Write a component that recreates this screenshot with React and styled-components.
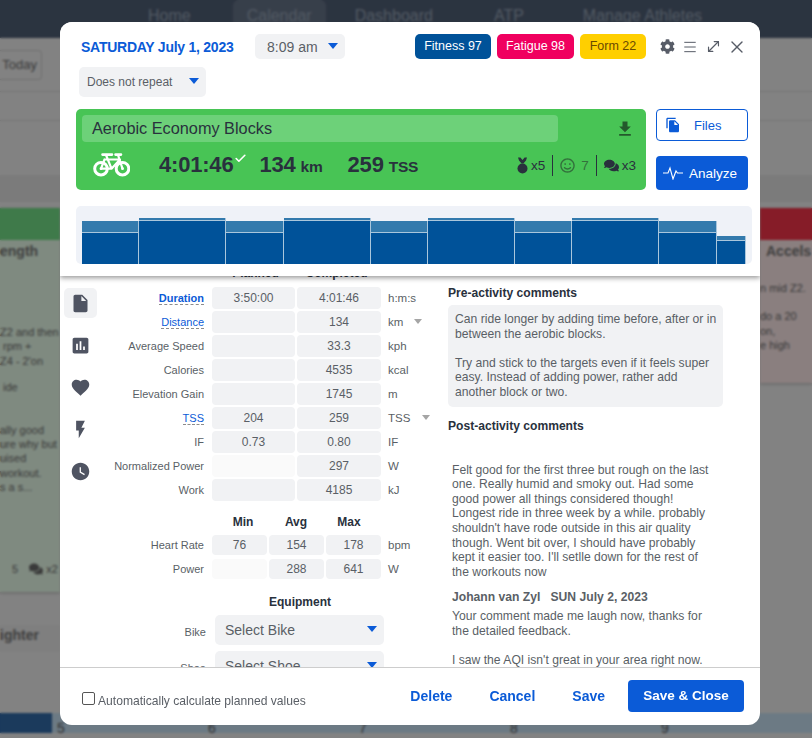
import React from 'react';
import styled, { createGlobalStyle } from 'styled-components';
import { Check, Menu, MoveDiagonal, X } from 'lucide-react';
import { FaCog, FaComments, FaRegSmile } from 'react-icons/fa';
import {
  MdAssessment,
  MdFavorite,
  MdFileCopy,
  MdFlashOn,
  MdGetApp,
  MdInsertDriveFile,
  MdWatchLater
} from 'react-icons/md';

const BLUE = '#0b5bd7';
const FIELD = '#f1f2f4';
const INK = '#5a5f66';
const DARK = '#29313d';

const GlobalStyle = createGlobalStyle`
  html, body { margin: 0; padding: 0; }
  body { font-family: "Liberation Sans", Arial, sans-serif; background: #f1f1f1; overflow: hidden; }
  * { box-sizing: border-box; }
`;

// ---- calendar behind the dialog ---------------------------------------------
const Page = styled.div`
  height: 738px;
  display: flex;
  flex-direction: column;
  overflow: hidden;
  color: #6c6c6c;
`;

const Nav = styled.div`
  height: 38px;
  flex: none;
  display: flex;
  background: #516077;
  padding-left: 134px;
`;

const NavItem = styled.div`
  margin-left: ${props => props.$ml}px;
  padding: 7px 14px 0;
  font-size: 16px;
  color: #98a6b8;
  border-radius: 6px 6px 0 0;
  background: ${props => props.$active ? '#67758a' : 'transparent'};
`;

const Toolbar = styled.div`
  height: 54px;
  flex: none;
  padding-top: 12px;
  border-bottom: 1px solid #d6d6d6;
`;

const TodayButton = styled.div`
  width: 42px;
  height: 30px;
  border: 1px solid #cfcfcf;
  border-left: 0;
  border-radius: 0 4px 4px 0;
  font-size: 13px;
  line-height: 28px;
  text-align: right;
  padding-right: 4px;
`;

const SubRow = styled.div`
  height: ${props => props.$h}px;
  flex: none;
  background: ${props => props.$bg || 'transparent'};
  border-bottom: ${props => props.$line ? '1px solid #d6d6d6' : '0'};
  margin-bottom: ${props => props.$mb || 0}px;
`;

const Columns = styled.div`
  flex: 1;
  display: flex;
  justify-content: space-between;
  min-height: 0;
`;

const SideColumn = styled.div`
  width: ${props => props.$w}px;
`;

const DayCard = styled.div`
  height: ${props => props.$h}px;
  background: ${props => props.$bg};
  font-size: 11px;
  line-height: 14.4px;
  white-space: nowrap;
  overflow: hidden;
  box-shadow: 0 1px 3px rgba(0, 0, 0, 0.25);
`;

const DayStripe = styled.div`
  height: 32px;
  background: ${props => props.$bg};
`;

const DayTitle = styled.div`
  margin-top: 2px;
  height: 22px;
  padding-left: ${props => props.$pl || 0}px;
  font-size: 14px;
  font-weight: 700;
  line-height: 18px;
  color: #757575;
`;

const DayText = styled.div`
  padding-left: ${props => props.$pl || 0}px;
`;

const DayBlock = styled.div`
  margin-top: ${props => props.$mt}px;
`;

const DayFoot = styled.div`
  margin-top: 67px;
  display: flex;
  align-items: center;
  gap: 11px;
  padding-left: 12px;
  font-size: 11px;
  svg { font-size: 14px; vertical-align: -3px; }
`;

const NextCard = styled.div`
  margin-top: 33px;
  height: 27px;
  background: #ebebeb;
  font-size: 14px;
  font-weight: 700;
  color: #757575;
  line-height: 20px;
`;

const WeekBand = styled.div`
  height: 20px;
  flex: none;
  margin-bottom: 5px;
  display: flex;
  background: #c8e2f4;
`;

const WeekStart = styled.div`
  width: 73px;
  background: #326baa;
`;

const WeekDays = styled.div`
  display: flex;
  padding-left: 5px;
  font-size: 14px;
  line-height: 30px;
  color: #5a5a5a;
`;

const WeekDay = styled.div`
  width: 151px;
`;

// ---- dialog -----------------------------------------------------------------
const Overlay = styled.div`
  position: fixed;
  inset: 0;
  padding: 22px 52px 13px 60px;
  display: flex;
  background: rgba(0, 0, 0, 0.46);
  backdrop-filter: blur(1px);
`;

const Modal = styled.div`
  width: 700px;
  height: 703px;
  display: flex;
  flex-direction: column;
  overflow: hidden;
  background: #fff;
  border-radius: 12px;
`;

const Header = styled.div`
  position: relative;
  z-index: 1;
  flex: none;
  height: 254px;
  padding-top: 12px;
  background: #fff;
  box-shadow: 0 2px 5px rgba(0, 0, 0, 0.4);
`;

const TopRow = styled.div`
  display: flex;
  align-items: center;
  height: 25px;
  padding: 0 13px 0 21px;
`;

const DateLabel = styled.div`
  width: 174px;
  font-size: 14px;
  font-weight: 700;
  letter-spacing: -0.25px;
  color: ${BLUE};
`;

const Select = styled.div`
  display: flex;
  align-items: center;
  justify-content: space-between;
  flex: none;
  width: ${props => props.$w}px;
  height: ${props => props.$h}px;
  padding: 0 ${props => props.$pr || 7}px 0 ${props => props.$pl || 10}px;
  border-radius: 5px;
  background: ${FIELD};
  color: ${INK};
  font-size: ${props => props.$size || 12}px;
`;

const Caret = styled.span`
  flex: none;
  width: 0;
  height: 0;
  margin-top: ${props => props.$mt || -2}px;
  border-left: ${props => props.$s || 5}px solid transparent;
  border-right: ${props => props.$s || 5}px solid transparent;
  border-top: ${props => props.$s ? props.$s + 1 : 6}px solid ${props => props.$color || BLUE};
`;

const Badges = styled.div`
  margin-left: auto;
  display: flex;
  gap: 6px;
`;

const Badge = styled.div`
  height: 25px;
  width: ${props => props.$w}px;
  border-radius: 5px;
  background: ${props => props.$bg};
  color: ${props => props.$color || '#fff'};
  font-size: 12.5px;
  line-height: 25px;
  text-align: center;
`;

const Tools = styled.div`
  display: flex;
  align-items: center;
  gap: 7px;
  margin-left: 14px;
  color: #575c67;
  svg:last-child { margin-left: -2px; }
`;

const SecondRow = styled.div`
  margin: 8px 0 12px 19px;
`;

const PanelRow = styled.div`
  display: flex;
  gap: 10px;
  padding: 0 12px 0 16px;
`;

const Panel = styled.div`
  width: 570px;
  height: 81px;
  padding: 6px;
  background: #48c455;
  border-radius: 5px;
  color: ${DARK};
`;

const TitleRow = styled.div`
  display: flex;
  align-items: center;
  height: 27px;
`;

const TitleField = styled.div`
  width: 476px;
  height: 27px;
  padding-left: 10px;
  border-radius: 4px;
  background: #6dd179;
  font-size: 16.3px;
  line-height: 26px;
`;

const DownloadIcon = styled(MdGetApp)`
  margin-left: 57px;
  font-size: 20px;
  color: #24592c;
`;

const StatRow = styled.div`
  display: flex;
  align-items: center;
  height: 46px;
  padding-left: 11px;
`;

const BigStat = styled.div`
  margin-left: ${props => props.$ml}px;
  font-size: 22px;
  font-weight: 700;
  letter-spacing: -0.2px;
  white-space: nowrap;
`;

const StatUnit = styled.span`
  margin-left: 5px;
  font-size: 15.5px;
`;

const DoneCheck = styled(Check)`
  align-self: flex-start;
  margin: 10px 0 0 1px;
  color: #fff;
`;

const Social = styled.div`
  margin-left: auto;
  margin-right: -3px;
  display: flex;
  align-items: center;
  font-size: 13.5px;
`;

const SocialItem = styled.div`
  display: flex;
  align-items: center;
  gap: ${props => props.$gap || 3}px;
  padding: 0 7px;
  height: 21px;
  color: ${props => props.$dim ? '#33713c' : DARK};
  border-left: ${props => props.$first ? '0' : `1px solid ${DARK}`};
`;

const ActionColumn = styled.div`
  display: flex;
  flex-direction: column;
  justify-content: space-between;
  width: 92px;
`;

const FilesButton = styled.div`
  display: flex;
  align-items: center;
  height: 32px;
  padding-left: 8px;
  border: 1px solid ${BLUE};
  border-radius: 4px;
  color: ${BLUE};
  font-size: 13px;
  svg { font-size: 16px; margin-right: 13px; }
`;

const AnalyzeButton = styled.div`
  display: flex;
  align-items: center;
  gap: 6px;
  height: 34px;
  padding-left: 7px;
  border-radius: 4px;
  background: ${BLUE};
  color: #fff;
  font-size: 13.5px;
`;

const ChartBox = styled.div`
  height: 58px;
  margin: 16px 8px 0 16px;
  padding-left: 6px;
  background: #eff2f8;
  border-radius: 5px;
  svg { display: block; }
`;

const Body = styled.div`
  flex: 1;
  min-height: 0;
  display: flex;
  overflow: hidden;
  padding-left: 4px;
`;

const Rail = styled.div`
  flex: none;
  width: 33px;
  margin-top: 12px;
  display: flex;
  flex-direction: column;
  align-items: center;
  gap: 12px;
  color: #4f5462;
`;

const RailItem = styled.div`
  width: 33px;
  height: 30px;
  display: flex;
  align-items: center;
  justify-content: center;
  font-size: 21px;
  border-radius: 5px;
  background: ${props => props.$active ? FIELD : 'transparent'};
`;

const Form = styled.div`
  flex: none;
  width: 351px;
  margin-top: -10px;
`;

const MetricRow = styled.div`
  display: flex;
  align-items: center;
  height: ${props => props.$h || 22}px;
  margin-bottom: ${props => props.$mb || 2}px;
  gap: 2px;
`;

const PlanHead = styled(MetricRow)`
  height: 19px;
  align-items: flex-start;
`;

const ColumnHead = styled.div`
  width: ${props => props.$w}px;
  font-size: 12px;
  line-height: 14px;
  font-weight: 700;
  text-align: center;
  color: ${DARK};
`;

const RowLabel = styled.div`
  flex: none;
  width: 107px;
  margin-right: 6px;
  text-align: right;
  font-size: 11px;
  color: ${INK};
`;

const LinkLabel = styled.span`
  color: ${BLUE};
  font-weight: ${props => props.$bold ? 700 : 400};
  border-bottom: 1px dashed #8c8c8c;
`;

const Cell = styled.div`
  flex: none;
  width: ${props => props.$w}px;
  height: 100%;
  border-radius: 4px;
  background: ${props => props.$faint ? '#fafafa' : FIELD};
  font-size: 12px;
  color: ${INK};
  display: flex;
  align-items: center;
  justify-content: center;
`;

const Unit = styled.div`
  display: flex;
  align-items: center;
  margin-left: 5px;
  font-size: 11.5px;
  color: ${INK};
`;

const UnitCaret = styled(Caret)`
  margin-left: ${props => props.$ml}px;
`;

const RangeHead = styled(MetricRow)`
  height: 14px;
  margin: 14px 0 6px;
`;

const Spacer = styled.div`
  width: ${props => props.$w}px;
  flex: none;
`;

const EquipHead = styled.div`
  margin: 16px 0 6px 0;
  padding-left: 55px;
  text-align: center;
  font-size: 12px;
  font-weight: 700;
  color: ${DARK};
`;

const EquipRow = styled.div`
  display: flex;
  align-items: center;
  margin-bottom: 6px;
`;

const EquipLabel = styled(RowLabel)`
  width: 109px;
  margin-right: 9px;
  padding-top: 3px;
`;

const Comments = styled.div`
  flex: none;
  width: 275px;
  padding-top: 10px;
`;

const SectionTitle = styled.div`
  font-size: 12.1px;
  font-weight: 700;
  line-height: 14px;
  color: ${DARK};
`;

const PreBox = styled.div`
  margin: 5px 0 12px;
  padding: 7px 0 7px 7px;
  background: ${FIELD};
  border-radius: 5px;
  font-size: 12.15px;
  line-height: 14.6px;
  color: ${INK};
  white-space: pre-line;
`;

const PostText = styled.div`
  padding-left: 4px;
  margin-top: ${props => props.$mt}px;
  font-size: 12.15px;
  line-height: 14.6px;
  font-weight: ${props => props.$bold ? 700 : 400};
  color: ${INK};
  white-space: pre-line;
`;

const Footer = styled.div`
  flex: none;
  height: 58px;
  display: flex;
  align-items: flex-start;
  padding: 12px 16px 0 22px;
  border-top: 1px solid #cdcdcd;
`;

const AutoLabel = styled.label`
  display: flex;
  align-items: center;
  gap: 3px;
  margin-top: 14px;
  font-size: 12.1px;
  color: ${INK};
`;

const CheckBox = styled.span`
  width: 13px;
  height: 13px;
  margin-top: -5px;
  border: 1px solid #555;
  border-radius: 2px;
  background: #fff;
`;

const FooterActions = styled.div`
  margin-left: auto;
  display: flex;
  align-items: center;
  height: 32px;
`;

const TextButton = styled.div`
  margin-right: ${props => props.$mr}px;
  font-size: 14px;
  font-weight: 700;
  color: ${BLUE};
`;

const SaveClose = styled.div`
  width: 116px;
  height: 32px;
  border-radius: 4px;
  background: ${BLUE};
  color: #fff;
  font-size: 13.5px;
  font-weight: 700;
  line-height: 31px;
  text-align: center;
`;

// ---- data -------------------------------------------------------------------
const NAV = [
  { label: 'Home', ml: 0 },
  { label: 'Calendar', ml: 28, active: true },
  { label: 'Dashboard', ml: 15 },
  { label: 'ATP', ml: 33 },
  { label: 'Manage Athletes', ml: 31 }
];

const METRICS = [
  { label: 'Duration', link: true, bold: true, planned: '3:50:00', done: '4:01:46', unit: 'h:m:s' },
  { label: 'Distance', link: true, done: '134', unit: 'km', caret: 11 },
  { label: 'Average Speed', done: '33.3', unit: 'kph' },
  { label: 'Calories', done: '4535', unit: 'kcal' },
  { label: 'Elevation Gain', done: '1745', unit: 'm' },
  { label: 'TSS', link: true, planned: '204', done: '259', unit: 'TSS', caret: 12 },
  { label: 'IF', planned: '0.73', done: '0.80', unit: 'IF' },
  { label: 'Normalized Power', faint: true, done: '297', unit: 'W' },
  { label: 'Work', done: '4185', unit: 'kJ' }
];

const RANGES = [
  { label: 'Heart Rate', min: '76', avg: '154', max: '178', unit: 'bpm' },
  { label: 'Power', min: '', avg: '288', max: '641', unit: 'W' }
];

// x, width, top of the block, top of the inner target
const BARS = [
  [0, 57, 15, 27], [57, 87, 12, 15], [144, 58, 15, 27], [202, 87, 12, 15], [289, 57, 15, 27],
  [346, 87, 12, 15], [433, 57, 15, 27], [490, 87, 12, 15], [577, 58, 15, 27], [635, 29, 30, 35]
];

const Bike = () => (
  <svg width="37" height="24" viewBox="0 0 37 24" fill="none" stroke="#fff" strokeWidth="2.2" strokeLinecap="round" strokeLinejoin="round">
    <circle cx="8" cy="15.7" r="6.3" strokeWidth="3" />
    <circle cx="29.5" cy="15.7" r="6.3" strokeWidth="3" />
    <circle cx="8" cy="15.7" r="1.4" fill="#fff" stroke="none" />
    <circle cx="29.5" cy="15.7" r="1.4" fill="#fff" stroke="none" />
    <path d="M9.5 1.6h9.5M22.5 1.6h5.5" strokeWidth="2.6" />
    <path d="M13 2l5.5 13.7M25 2l4.5 13.7M11.5 6.5h15.5M11.5 6.5L8 15.7h10.5L27 6.5" />
  </svg>
);

const Medal = () => (
  <svg width="11" height="17" viewBox="0 0 11 17" fill={DARK}>
    <circle cx="5.5" cy="11.5" r="5" />
    <path d="M1 0.5h2.4l2.1 2.6 2.1-2.6H10l-1 3-2.6 3h-1.8L2 3.5z" />
  </svg>
);

const Pulse = () => (
  <svg width="20" height="14" viewBox="0 0 20 14" fill="none" stroke="#fff" strokeWidth="1.1">
    <path d="M0 7h5l2-5 3 11 3-8 1.5 2H20" />
  </svg>
);

const WorkoutChart = () => (
  <svg width="664" height="58" viewBox="0 0 664 58">
    {BARS.map(([x, w, top, inner]) => (
      <g key={x}>
        <rect x={x} y={top} width={w - 0.5} height={58 - top} fill="#337aad" />
        <rect x={x} y={inner} width={w - 0.5} height={58 - inner} fill="#005299" />
        <path d={`M${x} ${inner - 0.5}h${w - 0.5}M${x + w - 0.5} ${top}V58`} stroke="#a9c6dc" strokeWidth="1" />
      </g>
    ))}
  </svg>
);

const App = () => (
  <>
    <GlobalStyle />
    <Page>
      <Nav>
        {NAV.map(n => <NavItem key={n.label} $ml={n.ml} $active={n.active}>{n.label}</NavItem>)}
      </Nav>
      <Toolbar><TodayButton>Today</TodayButton></Toolbar>
      <SubRow $h={29} $line />
      <SubRow $h={54} />
      <SubRow $h={27} $bg="#e4e4e4" $mb={6} />
      <Columns>
        <SideColumn $w={60}>
          <DayCard $h={384} $bg="#ebffed">
            <DayStripe $bg="#75e289" />
            <DayTitle>ength</DayTitle>
            <DayBlock $mt={61}>
              <DayText>Z2 and then</DayText>
              <DayText $pl={3}>rpm +</DayText>
              <DayText>Z4 - 2'on</DayText>
            </DayBlock>
            <DayBlock $mt={12}><DayText $pl={3}>ide</DayText></DayBlock>
            <DayBlock $mt={28}>
              <DayText>ally good</DayText>
              <DayText>ure why but</DayText>
              <DayText>uised</DayText>
              <DayText>workout.</DayText>
              <DayText>s a s...</DayText>
            </DayBlock>
            <DayFoot>5 <span><FaComments /> x2</span></DayFoot>
          </DayCard>
          <NextCard>ighter</NextCard>
        </SideColumn>
        <SideColumn $w={52}>
          <DayCard $h={175} $bg="#ffebeb">
            <DayStripe $bg="#f8344a" />
            <DayTitle $pl={6}>Accels</DayTitle>
            <DayBlock $mt={17}><DayText>n mid Z2.</DayText></DayBlock>
            <DayBlock $mt={14}>
              <DayText>do a 20</DayText>
              <DayText>on,</DayText>
              <DayText>e high</DayText>
            </DayBlock>
          </DayCard>
        </SideColumn>
      </Columns>
      <WeekBand>
        <WeekStart />
        <WeekDays>
          {[5, 6, 7, 8, 9].map(d => <WeekDay key={d}>{d}</WeekDay>)}
        </WeekDays>
      </WeekBand>
    </Page>

    <Overlay>
      <Modal>
        <Header>
          <TopRow>
            <DateLabel>SATURDAY July 1, 2023</DateLabel>
            <Select $w={90} $h={25} $pl={12} $size={14}>8:09 am<Caret /></Select>
            <Badges>
              <Badge $w={76} $bg="#005299">Fitness 97</Badge>
              <Badge $w={77} $bg="#f0005f">Fatigue 98</Badge>
              <Badge $w={66} $bg="#ffcf00" $color="#6b4a00">Form 22</Badge>
            </Badges>
            <Tools>
              <FaCog size={15} />
              <Menu size={16} strokeWidth={1.5} />
              <MoveDiagonal size={17} strokeWidth={1.7} />
              <X size={20} strokeWidth={1.6} />
            </Tools>
          </TopRow>
          <SecondRow>
            <Select $w={127} $h={30} $pl={8}>Does not repeat<Caret /></Select>
          </SecondRow>
          <PanelRow>
            <Panel>
              <TitleRow>
                <TitleField>Aerobic Economy Blocks</TitleField>
                <DownloadIcon />
              </TitleRow>
              <StatRow>
                <Bike />
                <BigStat $ml={29}>4:01:46</BigStat>
                <DoneCheck size={13} strokeWidth={3} />
                <BigStat $ml={12}>134<StatUnit>km</StatUnit></BigStat>
                <BigStat $ml={25}>259<StatUnit>TSS</StatUnit></BigStat>
                <Social>
                  <SocialItem $first><Medal />x5</SocialItem>
                  <SocialItem $dim $gap={6}><FaRegSmile size={15} />7</SocialItem>
                  <SocialItem><FaComments size={15} />x3</SocialItem>
                </Social>
              </StatRow>
            </Panel>
            <ActionColumn>
              <FilesButton><MdFileCopy />Files</FilesButton>
              <AnalyzeButton><Pulse />Analyze</AnalyzeButton>
            </ActionColumn>
          </PanelRow>
          <ChartBox><WorkoutChart /></ChartBox>
        </Header>

        <Body>
          <Rail>
            <RailItem $active><MdInsertDriveFile /></RailItem>
            <RailItem><MdAssessment /></RailItem>
            <RailItem><MdFavorite /></RailItem>
            <RailItem><MdFlashOn /></RailItem>
            <RailItem><MdWatchLater /></RailItem>
          </Rail>

          <Form>
            <PlanHead>
              <Spacer $w={117} />
              <ColumnHead $w={79}>Planned</ColumnHead>
              <ColumnHead $w={79}>Completed</ColumnHead>
            </PlanHead>
            {METRICS.map(m => (
              <MetricRow key={m.label}>
                <RowLabel>
                  {m.link ? <LinkLabel $bold={m.bold}>{m.label}</LinkLabel> : m.label}
                </RowLabel>
                <Cell $w={83} $faint={m.faint}>{m.planned}</Cell>
                <Cell $w={84}>{m.done}</Cell>
                <Unit>
                  {m.unit}
                  {m.caret && <UnitCaret $ml={m.caret} $s={4} $color="#a5a5a5" />}
                </Unit>
              </MetricRow>
            ))}
            <RangeHead>
              <Spacer $w={118.5} />
              <ColumnHead $w={51}>Min</ColumnHead>
              <ColumnHead $w={51}>Avg</ColumnHead>
              <ColumnHead $w={51}>Max</ColumnHead>
            </RangeHead>
            {RANGES.map(r => (
              <MetricRow key={r.label} $h={20} $mb={4}>
                <RowLabel>{r.label}</RowLabel>
                <Cell $w={55} $faint={!r.min}>{r.min}</Cell>
                <Cell $w={55}>{r.avg}</Cell>
                <Cell $w={55}>{r.max}</Cell>
                <Unit>{r.unit}</Unit>
              </MetricRow>
            ))}
            <EquipHead>Equipment</EquipHead>
            <EquipRow>
              <EquipLabel>Bike</EquipLabel>
              <Select $w={169} $h={30} $pl={10} $size={14}>Select Bike<Caret /></Select>
            </EquipRow>
            <EquipRow>
              <EquipLabel>Shoe</EquipLabel>
              <Select $w={169} $h={30} $pl={10} $size={14}>Select Shoe<Caret /></Select>
            </EquipRow>
          </Form>

          <Comments>
            <SectionTitle>Pre-activity comments</SectionTitle>
            <PreBox>
              {`Can ride longer by adding time before, after or in
between the aerobic blocks.

Try and stick to the targets even if it feels super
easy. Instead of adding power, rather add
another block or two.`}
            </PreBox>
            <SectionTitle>Post-activity comments</SectionTitle>
            <PostText $mt={30}>
              {`Felt good for the first three but rough on the last
one. Really humid and smoky out. Had some
good power all things considered though!
Longest ride in three week by a while. probably
shouldn't have rode outside in this air quality
though. Went bit over, I should have probably
kept it easier too. I'll setlle down for the rest of
the workouts now`}
            </PostText>
            <PostText $mt={11} $bold>Johann van Zyl&nbsp;&nbsp;&nbsp;SUN July 2, 2023</PostText>
            <PostText $mt={4}>
              {`Your comment made me laugh now, thanks for
the detailed feedback.

I saw the AQI isn't great in your area right now.`}
            </PostText>
          </Comments>
        </Body>

        <Footer>
          <AutoLabel><CheckBox />Automatically calculate planned values</AutoLabel>
          <FooterActions>
            <TextButton $mr={37}>Delete</TextButton>
            <TextButton $mr={37}>Cancel</TextButton>
            <TextButton $mr={23}>Save</TextButton>
            <SaveClose>Save &amp; Close</SaveClose>
          </FooterActions>
        </Footer>
      </Modal>
    </Overlay>
  </>
);

export default App;
